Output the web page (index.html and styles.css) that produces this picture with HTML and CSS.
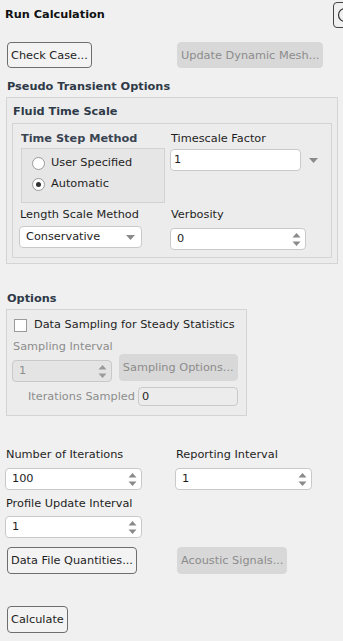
FILE: index.html
```html
<!DOCTYPE html>
<html lang="en">
<head>
<meta charset="UTF-8">
<meta name="viewport" content="width=device-width, initial-scale=1.0">
<title>Run Calculation</title>
<link rel="stylesheet" href="styles.css">
</head>
<body>
<div class="panel">
    <div class="titlebar">
        <h1 class="title">Run Calculation</h1>
        <button class="help-btn" title="Help">
            <svg width="16" height="16" viewBox="0 0 16 16"><circle cx="8" cy="8" r="6.5" fill="none" stroke="#333" stroke-width="1.2"/></svg>
        </button>
    </div>

    <div class="btn-row top-row">
        <button class="btn short">Check Case...</button>
        <button class="btn short" disabled>Update Dynamic Mesh...</button>
    </div>

    <h2 class="section-title">Pseudo Transient Options</h2>
    <div class="group pto">
        <h3 class="group-title">Fluid Time Scale</h3>
        <div class="group fts">
            <div class="fts-grid">
                <div class="field">
                    <div class="sub-title">Time Step Method</div>
                    <div class="radio-box">
                        <label class="radio"><span class="dot"></span>User Specified</label>
                        <label class="radio checked"><span class="dot"></span>Automatic</label>
                    </div>
                </div>
                <div class="field">
                    <div class="label">Timescale Factor</div>
                    <div class="combo-row">
                        <div class="input factor">1</div>
                        <svg class="caret" width="9" height="5" viewBox="0 0 9 5"><path d="M0 0h9L4.5 5z" fill="#8a8a8a"/></svg>
                    </div>
                </div>
                <div class="field">
                    <div class="label">Length Scale Method</div>
                    <div class="input select">
                        <span>Conservative</span>
                        <svg width="9" height="5" viewBox="0 0 9 5"><path d="M0 0h9L4.5 5z" fill="#8a8a8a"/></svg>
                    </div>
                </div>
                <div class="field">
                    <div class="label">Verbosity</div>
                    <div class="input spin verbosity">
                        <span>0</span>
                        <svg class="arrows" width="9" height="15" viewBox="0 0 9 15"><path d="M0.5 5.5L4.5 1l4 4.5z M0.5 9.5h8L4.5 14z" fill="#8a8a8a"/></svg>
                    </div>
                </div>
            </div>
        </div>
    </div>

    <h2 class="section-title options-title">Options</h2>
    <div class="group options">
        <label class="check"><span class="box"></span>Data Sampling for Steady Statistics</label>
        <div class="sampling-row">
            <div class="field">
                <div class="label muted">Sampling Interval</div>
                <div class="input spin disabled small">
                    <span>1</span>
                    <svg class="arrows" width="9" height="15" viewBox="0 0 9 15"><path d="M0.5 5.5L4.5 1l4 4.5z M0.5 9.5h8L4.5 14z" fill="#9a9a9a"/></svg>
                </div>
            </div>
            <button class="btn" disabled>Sampling Options...</button>
        </div>
        <div class="sampled-row">
            <span class="muted">Iterations Sampled</span>
            <div class="input sampled">0</div>
        </div>
    </div>

    <div class="iter-grid">
        <div class="field">
            <div class="label">Number of Iterations</div>
            <div class="input spin wide">
                <span>100</span>
                <svg class="arrows" width="9" height="15" viewBox="0 0 9 15"><path d="M0.5 5.5L4.5 1l4 4.5z M0.5 9.5h8L4.5 14z" fill="#8a8a8a"/></svg>
            </div>
        </div>
        <div class="field">
            <div class="label">Reporting Interval</div>
            <div class="input spin wide">
                <span>1</span>
                <svg class="arrows" width="9" height="15" viewBox="0 0 9 15"><path d="M0.5 5.5L4.5 1l4 4.5z M0.5 9.5h8L4.5 14z" fill="#8a8a8a"/></svg>
            </div>
        </div>
        <div class="field profile">
            <div class="label">Profile Update Interval</div>
            <div class="input spin wide">
                <span>1</span>
                <svg class="arrows" width="9" height="15" viewBox="0 0 9 15"><path d="M0.5 5.5L4.5 1l4 4.5z M0.5 9.5h8L4.5 14z" fill="#8a8a8a"/></svg>
            </div>
        </div>
    </div>

    <div class="btn-row data-row">
        <button class="btn">Data File Quantities...</button>
        <button class="btn" disabled>Acoustic Signals...</button>
    </div>

    <div class="calc-row">
        <button class="btn">Calculate</button>
    </div>
</div>
</body>
</html>
```

FILE: styles.css
```css
body {
    margin: 0;
    background-color: #f0f0f0;
    font-family: "DejaVu Sans", Tahoma, sans-serif;
    font-size: 11.3px;
    color: #1e1e1e;
    overflow: hidden;
}
.panel {
    width: 343px;
}
.titlebar {
    display: flex;
    justify-content: space-between;
    align-items: flex-start;
    height: 30px;
}
.title {
    margin: 8px 0 0 5px;
    font-size: 11.3px;
    line-height: 14px;
    font-weight: bold;
    color: #111;
}
.help-btn {
    margin: 2px -14px 0 0;
    width: 24px;
    height: 26px;
    padding: 0 0 0 3px;
    border: 1px solid #444;
    border-radius: 4px;
    background-color: #f0f0f0;
    display: flex;
    align-items: center;
}
.btn {
    font-family: inherit;
    font-size: 11.3px;
    color: #1e1e1e;
    height: 27px;
    padding: 0 3px;
    border: 1px solid #6e6e6e;
    border-radius: 4px;
    background-color: #f3f3f3;
    white-space: nowrap;
}
.btn:disabled {
    color: #8c8c8c;
    background-color: #d8d8d8;
    border-color: #d8d8d8;
}
.btn.short {
    height: 26px;
}
.btn-row {
    display: grid;
    grid-template-columns: 170px 1fr;
    padding-left: 7px;
    justify-items: start;
}
.top-row {
    margin-top: 12px;
}
.section-title {
    margin: 12px 0 3px 7px;
    font-size: 11.3px;
    line-height: 14px;
    font-weight: bold;
    color: #2f3a48;
}
.group {
    border: 1px solid #d4d4d4;
    background-color: #ececec;
}
.pto {
    margin-left: 6px;
    width: 332px;
    padding: 0 5px 5px 5px;
    box-sizing: border-box;
}
.group-title {
    margin: 7px 0 4px 1px;
    font-size: 11.3px;
    line-height: 14px;
    font-weight: bold;
    color: #2f3a48;
}
.fts {
    padding: 8px 0 7px 6px;
}
.fts-grid {
    display: grid;
    grid-template-columns: 145px 1fr;
    column-gap: 6px;
    row-gap: 5px;
}
.field {
    display: flex;
    flex-direction: column;
    align-items: flex-start;
}
.label {
    line-height: 14px;
    padding-left: 1px;
}
.sub-title {
    margin-left: 2px;
    line-height: 14px;
    font-size: 11.3px;
    font-weight: bold;
    color: #3a4452;
}
.radio-box {
    margin: 2px 0 0 2px;
    width: 144px;
    height: 55px;
    padding: 7px 0 0 10px;
    box-sizing: border-box;
    border: 1px solid #d2d2d2;
    background-color: #e6e6e6;
    display: flex;
    flex-direction: column;
    gap: 7px;
}
.radio {
    display: flex;
    align-items: center;
    gap: 6px;
    line-height: 14px;
}
.dot {
    width: 13px;
    height: 13px;
    box-sizing: border-box;
    border: 1px solid #9a9a9a;
    border-radius: 50%;
    background-color: #fff;
    display: flex;
    align-items: center;
    justify-content: center;
}
.radio.checked .dot::after {
    content: "";
    width: 5px;
    height: 5px;
    border-radius: 50%;
    background-color: #333;
}
.input {
    height: 22px;
    box-sizing: border-box;
    border: 1px solid #c9c9c9;
    border-radius: 4px;
    background-color: #fff;
    padding: 0 6px;
    display: flex;
    align-items: center;
    justify-content: space-between;
    line-height: 14px;
}
.combo-row {
    margin-top: 3px;
    display: flex;
    align-items: center;
    gap: 8px;
}
.input.factor {
    width: 131px;
    padding-left: 3px;
}
.input.select {
    margin-top: 4px;
    width: 123px;
}
.input.verbosity {
    margin-top: 6px;
    width: 136px;
}
.spin {
    padding-right: 4px;
}
.arrows {
    display: block;
}
.options-title {
    margin-top: 28px;
}
.options {
    margin-left: 6px;
    width: 241px;
    box-sizing: border-box;
    padding: 8px 0 9px 5px;
}
.check {
    margin-left: 2px;
    display: flex;
    align-items: center;
    gap: 7px;
    line-height: 14px;
}
.box {
    width: 13px;
    height: 13px;
    box-sizing: border-box;
    border: 1px solid #9a9a9a;
    background-color: #fff;
}
.muted {
    color: #8c8c8c;
}
.sampling-row {
    margin-top: 8px;
    display: flex;
    align-items: flex-end;
    gap: 6px;
}
.sampling-row .btn {
    margin-bottom: 1px;
    width: 119px;
}
.input.small {
    margin-top: 6px;
    width: 100px;
}
.input.disabled {
    background-color: #e4e4e4;
    color: #8c8c8c;
}
.sampled-row {
    margin-top: 5px;
    padding-left: 16px;
    display: flex;
    align-items: center;
    gap: 3px;
}
.input.sampled {
    width: 100px;
    height: 19px;
    padding-left: 3px;
    background-color: #ececec;
}
.iter-grid {
    margin-top: 32px;
    padding-left: 5px;
    display: grid;
    grid-template-columns: 170px 1fr;
    row-gap: 7px;
}
.iter-grid .input {
    margin-top: 6px;
}
.iter-grid .profile .input {
    margin-top: 5px;
}
.input.wide {
    width: 137px;
}
.data-row {
    margin-top: 9px;
}
.calc-row {
    margin-top: 32px;
    padding-left: 7px;
}
```
